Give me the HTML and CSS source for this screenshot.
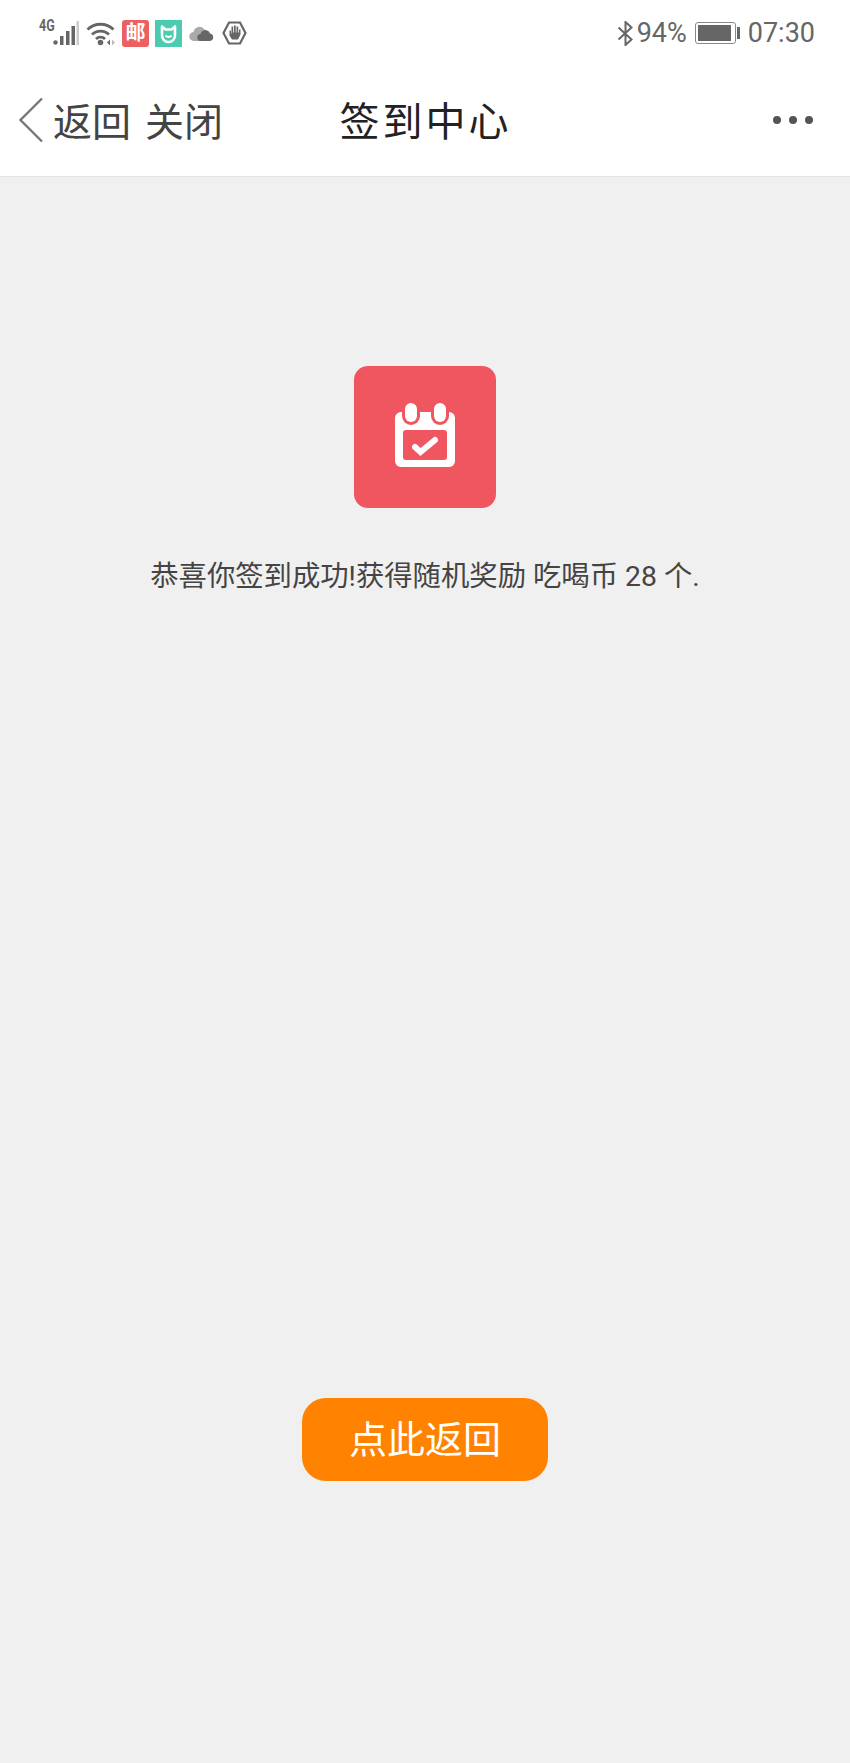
FILE: index.html
```html
<!DOCTYPE html>
<html lang="zh-CN">
<head>
    <meta charset="UTF-8">
    <meta name="viewport" content="width=device-width, initial-scale=1.0">
    <title>签到中心</title>
    <link rel="stylesheet" href="styles.css">
</head>
<body>
    <div class="page">
        <div class="status">
            <div class="status__left">
                <div class="signal">
                    <span class="signal__type">4G</span>
                    <svg class="signal__bars" width="26" height="24" viewBox="0 0 26 24">
                        <circle cx="2.5" cy="21.5" r="2.2" fill="#666"/>
                        <rect x="7" y="15" width="3.5" height="9" fill="#666"/>
                        <rect x="13" y="10" width="3.5" height="14" fill="#666"/>
                        <rect x="18.500" y="5" width="3.500" height="19" fill="#666"/>
                        <rect x="23.500" y="0" width="2.500" height="24" fill="#ccc"/>
                    </svg>
                </div>
                <svg class="status__icon--wifi" width="30" height="25" viewBox="0 0 30 25">
                    <path d="M1.5 8.5C8.5 1.5 20.5 1.5 27.5 8.5" fill="none" stroke="#666" stroke-width="2.8"/>
                    <path d="M6 13.5C10.5 9 18.5 9 23 13.5" fill="none" stroke="#666" stroke-width="2.8"/>
                    <path d="M10 18C12.5 15.500 16.500 15.500 19 18" fill="none" stroke="#666" stroke-width="2.8"/>
                    <circle cx="14.500" cy="21.500" r="2.800" fill="#666"/>
                    <path d="M21 21.500l3-3v6z" fill="#666"/>
                    <path d="M26 18.500l3 3-3 3z" fill="#bbb"/>
                </svg>
                <span class="badge badge--mail">邮</span>
                <svg class="badge" width="27" height="27" viewBox="0 0 27 27">
                    <rect width="27" height="27" fill="#4ccbb0"/>
                    <path d="M7 6.500l3.500 3h6l3.500-3V15.500a6.500 6.500 0 0 1-13 0z" fill="none" stroke="#fff" stroke-width="2.600" stroke-linejoin="round"/>
                    <path d="M10.500 15.500c1.500 2 4.500 2 6 0" fill="none" stroke="#fff" stroke-width="2"/>
                </svg>
                <svg class="status__icon--cloud" width="25" height="16" viewBox="0 0 25 16">
                    <path d="M5 16a4.500 4.500 0 0 1-.5-9A6 6 0 0 1 15.500 4.500 5 5 0 0 1 14 16z" fill="#aaa"/>
                    <path d="M12 16a3.500 3.500 0 0 1-.5-7 5 5 0 0 1 9.500-.5A3.800 3.800 0 0 1 21 16z" fill="#666"/>
                </svg>
                <svg class="status__icon--hand" width="25" height="24" viewBox="0 0 25 24">
                    <path d="M7 1.500h11l5.500 10.500L18 22.500H7L1.500 12z" fill="none" stroke="#666" stroke-width="2.200"/>
                    <path d="M7.500 9.500v5l2.500 4h6l2.500-5v-5h-1.500v3h-.8V5.500h-1.700v6h-.8V4.500h-1.700v7h-.8V5.500h-1.700v7H9V9.500z" fill="#666"/>
                </svg>
            </div>
            <div class="status__right">
                <svg class="status__icon--bt" width="17" height="25" viewBox="0 0 17 25">
                    <path d="M1.500 6.500l13 12-6 5.500V1l6 5.500-13 12" fill="none" stroke="#666" stroke-width="2"/>
                </svg>
                <span class="status__text status__text--battery">94%</span>
                <div class="battery">
                    <div class="battery__body"><div class="battery__level"></div></div>
                    <div class="battery__tip"></div>
                </div>
                <span class="status__text">07:30</span>
            </div>
        </div>

        <div class="topbar">
            <div class="topbar__left">
                <svg class="topbar__back" width="26" height="46" viewBox="0 0 26 46">
                    <path d="M24 1.500L2.500 23 24 44.500" fill="none" stroke="#777" stroke-width="2.400"/>
                </svg>
                <span class="topbar__link">返回</span>
                <span class="topbar__link">关闭</span>
            </div>
            <div class="topbar__title">签到中心</div>
            <div class="topbar__more">
                <span class="dot"></span>
                <span class="dot"></span>
                <span class="dot"></span>
            </div>
        </div>

        <div class="content">
            <div class="checkin-icon">
                <svg width="60" height="64" viewBox="0 0 60 64">
                    <path d="M6 9h48a6 6 0 0 1 6 6v43a6 6 0 0 1-6 6H6a6 6 0 0 1-6-6V15a6 6 0 0 1 6-6z" fill="#fff"/>
                    <rect x="8" y="27" width="44" height="30" rx="3" fill="#f0565f"/>
                    <rect x="7" y="-2" width="18" height="24" rx="9" fill="#f0565f"/>
                    <rect x="36" y="-2" width="18" height="24" rx="9" fill="#f0565f"/>
                    <rect x="10" y="0" width="12" height="19" rx="6" fill="#fff"/>
                    <rect x="39" y="0" width="12" height="19" rx="6" fill="#fff"/>
                    <path d="M20 44l5.500 5L40 37" fill="none" stroke="#fff" stroke-width="6" stroke-linecap="round"/>
                </svg>
            </div>
            <p class="message">恭喜你签到成功!获得随机奖励 吃喝币 28 个.</p>
            <a class="back-btn">点此返回</a>
        </div>
    </div>
</body>
</html>
```

FILE: styles.css
```css
/* Global Styles */
html, body {
    margin: 0;
    padding: 0;
    font-family: Roboto, "Noto Sans CJK SC", sans-serif;
    color: #333;
}

.page {
    width: 850px;
    height: 1763px;
    display: flex;
    flex-direction: column;
    background-color: #f0f0f0;
}

/* Status bar */
.status {
    height: 66px;
    box-sizing: border-box;
    background-color: #fff;
    padding: 0 35px 0 40px;
    display: flex;
    justify-content: space-between;
    align-items: center;
}

.status__left,
.status__right {
    display: flex;
    align-items: center;
}

.signal {
    position: relative;
    width: 39px;
    height: 24px;
}

.signal__type {
    position: absolute;
    left: -1px;
    top: -3px;
    font-size: 16px;
    line-height: 16px;
    font-weight: 700;
    color: #666;
    transform: scaleX(0.78);
    transform-origin: left;
}

.signal__bars {
    position: absolute;
    right: 0;
    top: 0;
}

.status__icon--wifi {
    margin-left: 7px;
}

.badge {
    display: block;
    width: 27px;
    height: 27px;
    margin-left: 6px;
}

.badge--mail {
    background-color: #ee5f62;
    border-radius: 3px;
    color: #fff;
    font-size: 20px;
    font-weight: 700;
    line-height: 27px;
    text-align: center;
}

.status__icon--cloud {
    margin-left: 7px;
}

.status__icon--hand {
    margin-left: 8px;
}

.status__text {
    font-size: 27px;
    color: #666;
}

.status__text--battery {
    margin-left: 3px;
}

.battery {
    display: flex;
    align-items: center;
    margin: 0 8px;
}

.battery__body {
    width: 41px;
    height: 22px;
    box-sizing: border-box;
    border: 1px solid #888;
    border-radius: 3px;
    padding: 2px;
}

.battery__level {
    width: 33px;
    height: 16px;
    background-color: #666;
}

.battery__tip {
    width: 3px;
    height: 12px;
    margin-left: 1px;
    background-color: #666;
}

/* Top bar */
.topbar {
    position: relative;
    height: 111px;
    box-sizing: border-box;
    background-color: #fff;
    border-bottom: 1px solid #e4e4e4;
    padding: 0 37px 2px 18px;
    display: flex;
    justify-content: space-between;
    align-items: center;
}

.topbar__left {
    display: flex;
    align-items: center;
}

.topbar__back {
    margin-right: 9px;
}

.topbar__link {
    font-size: 39px;
    color: #444;
    margin-right: 14px;
    margin-bottom: 2px;
}

.topbar__title {
    position: absolute;
    left: 1px;
    right: 0;
    margin-bottom: 2px;
    text-align: center;
    font-size: 40px;
    letter-spacing: 3px;
    color: #222;
    pointer-events: none;
}

.topbar__more {
    display: flex;
    gap: 8px;
}

.dot {
    width: 8px;
    height: 8px;
    border-radius: 50%;
    background-color: #555;
}

/* Main */
.content {
    flex: 1;
    display: flex;
    flex-direction: column;
    align-items: center;
    padding: 189px 0 282px;
}

.checkin-icon {
    width: 142px;
    height: 142px;
    box-sizing: border-box;
    padding-bottom: 4px;
    border-radius: 14px;
    background-color: #f0565f;
    display: flex;
    align-items: center;
    justify-content: center;
}

.message {
    margin: 51px 0 0;
    font-size: 28.35px;
    line-height: 36px;
    color: #444;
}

.back-btn {
    margin-top: auto;
    width: 246px;
    height: 83px;
    border-radius: 24px;
    background-color: #ff8300;
    color: #fff;
    font-size: 38px;
    line-height: 84px;
    text-align: center;
}
```
